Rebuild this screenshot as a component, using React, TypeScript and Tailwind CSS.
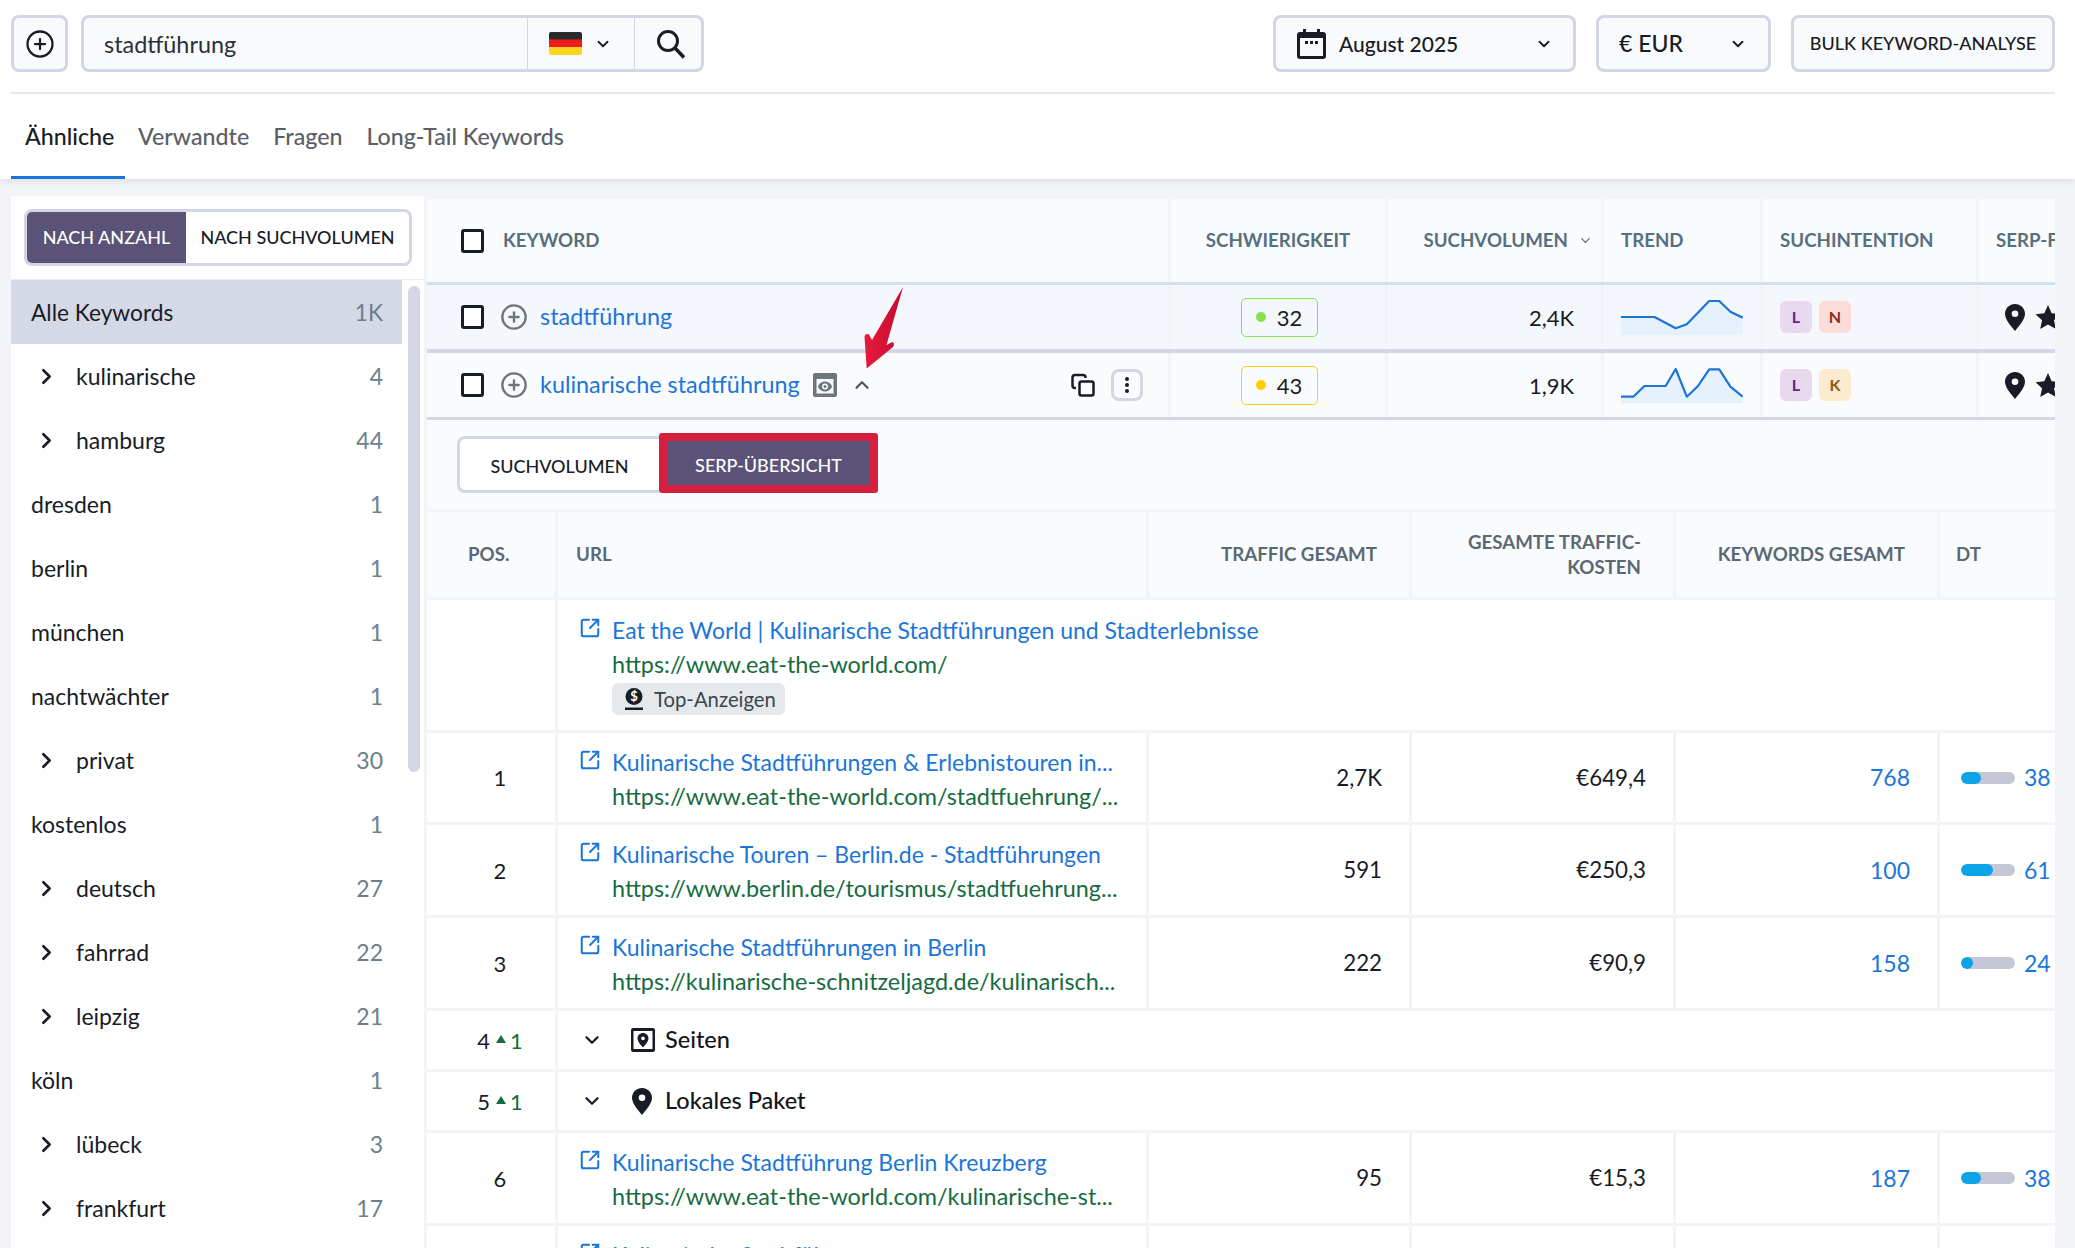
import { ChevronDown, ChevronRight, ChevronUp, CirclePlus, SquareArrowOutUpRight } from 'lucide-react';

const sidebarItems = [
    { label: 'kulinarische', count: '4', nested: true },
    { label: 'hamburg', count: '44', nested: true },
    { label: 'dresden', count: '1' },
    { label: 'berlin', count: '1' },
    { label: 'münchen', count: '1' },
    { label: 'nachtwächter', count: '1' },
    { label: 'privat', count: '30', nested: true },
    { label: 'kostenlos', count: '1' },
    { label: 'deutsch', count: '27', nested: true },
    { label: 'fahrrad', count: '22', nested: true },
    { label: 'leipzig', count: '21', nested: true },
    { label: 'köln', count: '1' },
    { label: 'lübeck', count: '3', nested: true },
    { label: 'frankfurt', count: '17', nested: true },
];

const keywordCols = 'grid grid-cols-[744px_217px_216px_159px_216px_76px]';
const serpCols = 'grid grid-cols-[131px_591px_263px_264px_264px_115px]';
const cellLine = 'border-r-[3px] border-[#f3f4f8]';
const headText = 'text-[18.700px] font-bold text-[#55707f]';

function Pin({ className }: { className?: string }) {
    return (
        <svg viewBox="0 0 20 27" className={className}>
            <path
                fill="#181c26"
                fillRule="evenodd"
                d="M10 0C4.500 0 0 4.300 0 9.800 0 15.800 6.600 22.600 10 27c3.400-4.400 10-11.200 10-17.200C20 4.300 15.500 0 10 0zm0 6.500a3.300 3.300 0 1 1 0 6.600 3.300 3.300 0 0 1 0-6.600z"
            />
        </svg>
    );
}

function Star({ className }: { className?: string }) {
    return (
        <svg viewBox="0 0 24 24" className={className}>
            <path fill="#181c26" d="M12 1l3.400 7.500 8.100.9-6 5.500 1.700 8.100L12 18.900 4.800 23l1.700-8.100-6-5.500 8.100-.9z" />
        </svg>
    );
}

function Checkbox() {
    return <span className="block h-[24px] w-[23px] shrink-0 rounded-[3px] border-[3px] border-[#181c26] bg-white" />;
}

function Sparkline({ points, fill }: { points: string; fill: string }) {
    return (
        <svg width="122" height="40" viewBox="0 0 122 40">
            <polygon points={fill} fill="#e5f1fb" />
            <polyline points={points} fill="none" stroke="#1b75d9" strokeWidth="2.200" strokeLinejoin="round" />
        </svg>
    );
}

function KeywordRow(props: {
    keyword: string;
    score: string;
    volume: string;
    badge: string;
    dot: string;
    letter: string;
    letterBg: string;
    letterColor: string;
    bg: string;
    height: string;
    expanded?: boolean;
    spark: React.ReactNode;
}) {
    return (
        <div className={`${keywordCols} ${props.bg} ${props.height}`}>
            <div className={`flex items-center pl-[34px] ${cellLine}`}>
                <Checkbox />
                <CirclePlus className="ml-[16px] h-[28px] w-[28px] shrink-0 text-[#6d757d]" strokeWidth={2} />
                <a className="ml-[12px] text-[23.400px] text-[#1b75d9]">{props.keyword}</a>
                {props.expanded && (
                    <>
                        <svg viewBox="0 0 24 24" className="ml-[13px] h-[24px] w-[24px]">
                            <path
                                fill="#6d757d"
                                fillRule="evenodd"
                                d="M2 0h20a2 2 0 0 1 2 2v20a2 2 0 0 1-2 2H2a2 2 0 0 1-2-2V2a2 2 0 0 1 2-2zm1.500 6v14.500h17V6zM12 8.500c3.500 0 6.200 2.400 7 5-.8 2.600-3.500 5-7 5s-6.200-2.400-7-5c.8-2.600 3.500-5 7-5zm0 2a3 3 0 1 0 0 6 3 3 0 0 0 0-6zm0 1.500a1.500 1.500 0 1 1 0 3 1.500 1.500 0 0 1 0-3z"
                            />
                        </svg>
                        <ChevronUp className="ml-[14px] h-[22px] w-[22px] text-[#4b5563]" strokeWidth={2.400} />
                        <svg viewBox="0 0 24 24" fill="none" stroke="#181c26" strokeWidth="2.500" className="ml-auto h-[24px] w-[24px]">
                            <rect x="8.500" y="8.500" width="14" height="14" rx="2" />
                            <path d="M5 15H4a2.500 2.500 0 0 1-2.500-2.500v-8A2.500 2.500 0 0 1 4 2h8a2.500 2.500 0 0 1 2.500 2.500V5" />
                        </svg>
                        <span className="mr-[25px] ml-[16px] flex h-[32px] w-[32px] items-center justify-center rounded-[8px] border-[3px] border-[#d3d6e4] bg-[#fafbfd]">
                            <span className="flex flex-col gap-[2px]">
                                <span className="h-[4px] w-[4px] rounded-full bg-[#181c26]" />
                                <span className="h-[4px] w-[4px] rounded-full bg-[#181c26]" />
                                <span className="h-[4px] w-[4px] rounded-full bg-[#181c26]" />
                            </span>
                        </span>
                    </>
                )}
            </div>
            <div className={`flex items-center justify-center pl-[2px] ${cellLine}`}>
                <span className={`flex h-[39px] w-[77px] items-center justify-center gap-[11px] rounded-[5px] border-[1.500px] text-[22px] ${props.badge}`}>
                    <span className={`h-[10px] w-[10px] rounded-full ${props.dot}`} />
                    {props.score}
                </span>
            </div>
            <div className={`flex items-center justify-end pr-[27px] text-[22px] ${cellLine}`}>{props.volume}</div>
            <div className={`flex items-center pl-[17px] ${cellLine}`}>{props.spark}</div>
            <div className={`flex items-center gap-[7px] pl-[17px] ${cellLine}`}>
                <span className="flex h-[32px] w-[32px] items-center justify-center rounded-[6px] bg-[#e8d9ef] text-[16px] font-bold text-[#5b2a86]">
                    L
                </span>
                <span className={`flex h-[32px] w-[32px] items-center justify-center rounded-[6px] text-[16px] font-bold ${props.letterBg} ${props.letterColor}`}>
                    {props.letter}
                </span>
            </div>
            <div className="flex items-center gap-[10px] overflow-hidden pl-[26px]">
                <Pin className="h-[27px] w-[20px] shrink-0" />
                <Star className="h-[26px] w-[26px] shrink-0" />
            </div>
        </div>
    );
}

function UrlCell({ title, url, badge }: { title: string; url: string; badge?: boolean }) {
    return (
        <div className={`flex gap-[11px] pl-[21px] ${badge ? 'pt-[13px]' : 'pt-[12px]'}`}>
            <SquareArrowOutUpRight className="mt-[4px] h-[22px] w-[22px] shrink-0 text-[#1b75d9]" strokeWidth={2.200} />
            <div className="min-w-0">
                <div className="text-[23px] leading-[34px] whitespace-nowrap text-[#1b75d9]">{title}</div>
                <div className="text-[23.400px] leading-[34px] whitespace-nowrap text-[#166c3f]">{url}</div>
                {badge && (
                    <span className="mt-[2px] flex h-[32px] w-[173px] items-center gap-[10px] rounded-[6px] bg-[#e6e9ec] pl-[12px] text-[20.300px] text-[#3a4650]">
                        <svg viewBox="0 0 20 22" className="h-[22px] w-[20px] shrink-0">
                            <circle cx="10" cy="8.500" r="8.500" fill="#181c26" />
                            <path fill="#181c26" d="M1 19.500h18V22H1z" />
                            <text x="10" y="13" textAnchor="middle" fontSize="13" fontWeight="700" fill="#fff">
                                $
                            </text>
                        </svg>
                        Top-Anzeigen
                    </span>
                )}
            </div>
        </div>
    );
}

function Bar({ value, width }: { value: string; width: number }) {
    return (
        <div className="flex items-center gap-[9px] pl-[21px]">
            <div className="h-[12px] w-[54px] shrink-0 overflow-hidden rounded-full bg-[#c5c7d6]">
                <div className="h-full rounded-full bg-[#0da4e7]" style={{ width }} />
            </div>
            <a className="text-[23px] text-[#1b75d9]">{value}</a>
        </div>
    );
}

function SerpRow(props: { pos: string; title: string; url: string; traffic: string; cost: string; keywords: string; dt: string; bar: number; height: string }) {
    return (
        <div className={`${serpCols} border-b-[3px] border-[#f3f4f8] bg-white ${props.height}`}>
            <div className={`flex items-center justify-center pl-[18px] text-[22px] ${cellLine}`}>{props.pos}</div>
            <div className={cellLine}>
                <UrlCell title={props.title} url={props.url} />
            </div>
            <div className={`flex items-center justify-end pr-[27px] text-[22.300px] ${cellLine}`}>{props.traffic}</div>
            <div className={`flex items-center justify-end pr-[27px] text-[22.300px] ${cellLine}`}>{props.cost}</div>
            <div className={`flex items-center justify-end pr-[27px] text-[23px] text-[#1b75d9] ${cellLine}`}>{props.keywords}</div>
            <Bar value={props.dt} width={props.bar} />
        </div>
    );
}

function GroupRow({ pos, label, icon }: { pos: string; label: string; icon: React.ReactNode }) {
    return (
        <div className="grid h-[61px] grid-cols-[131px_1fr] border-b-[3px] border-[#f3f4f8] bg-white">
            <div className={`flex items-center justify-center gap-[6px] pl-[18px] text-[22px] ${cellLine}`}>
                {pos}
                <span className="flex items-center gap-[4px] text-[#166c3f]">
                    <span className="mt-[-2px] h-0 w-0 border-x-[5px] border-b-[8px] border-x-transparent border-b-[#166c3f]" />1
                </span>
            </div>
            <div className="flex items-center pl-[23px]">
                <ChevronDown className="h-[22px] w-[22px] text-[#181c26]" strokeWidth={2.500} />
                <span className="ml-[28px] flex w-[34px] shrink-0">{icon}</span>
                <span className="text-[23.500px] font-medium text-[#12151c]">{label}</span>
            </div>
        </div>
    );
}

export default function App() {
    return (
        <div className="relative h-[1248px] w-[2075px] overflow-hidden bg-[#f3f4f8] font-[Lato,sans-serif] text-[#181c26]">
            <div className="relative z-10 bg-white pr-[20px] pl-[11px] shadow-[0_2px_8px_rgba(20,30,60,0.1)]">
                <div className="flex h-[92px] items-start pt-[15px]">
                    <button className="flex h-[57px] w-[57px] items-center justify-center rounded-[8px] border-[3px] border-[#d3d6e4] bg-[#f9fafc]">
                        <CirclePlus className="h-[30px] w-[30px] text-[#181c26]" strokeWidth={1.800} />
                    </button>
                    <div className="ml-[13px] flex h-[57px] w-[623px] items-stretch rounded-[8px] border-[3px] border-[#d3d6e4] bg-[#f9fafc]">
                        <div className="flex flex-1 items-center pt-[2px] pl-[20px] text-[23.400px] text-[#2b2f38]">stadtführung</div>
                        <div className="flex w-[108px] items-center gap-[12px] border-x border-[#d3d6e4] pl-[21px]">
                            <svg viewBox="0 0 33 23" className="h-[23px] w-[33px]">
                                <path fill="#2a2a2a" d="M2 0h29a2 2 0 0 1 2 2v6H0V2a2 2 0 0 1 2-2z" />
                                <rect y="7.500" width="33" height="8" fill="#ef1c1c" />
                                <path fill="#ffd61f" d="M0 15h33v6a2 2 0 0 1-2 2H2a2 2 0 0 1-2-2z" />
                            </svg>
                            <ChevronDown className="h-[18px] w-[18px] text-[#181c26]" strokeWidth={2.400} />
                        </div>
                        <div className="flex w-[66px] items-center justify-center pl-[5px]">
                            <svg viewBox="0 0 30 30" fill="none" stroke="#181c26" className="h-[30px] w-[30px]">
                                <circle cx="12" cy="12" r="9.500" strokeWidth="3" />
                                <path d="M19 19l9 9.500" strokeWidth="3.500" />
                            </svg>
                        </div>
                    </div>
                    <button className="ml-auto flex h-[57px] w-[303px] items-center rounded-[8px] border-[3px] border-[#d3d6e4] bg-[#f9fafc] pl-[21px] text-[21px] font-medium">
                        <svg viewBox="0 0 29 30" className="h-[30px] w-[29px]">
                            <path
                                fill="#181c26"
                                fillRule="evenodd"
                                d="M6 0h3v3h11V0h3v3h3a3 3 0 0 1 3 3v21a3 3 0 0 1-3 3H3a3 3 0 0 1-3-3V6a3 3 0 0 1 3-3h3zM3 9v18h23V9zm5 3h3v3H8zm5 0h3v3h-3zm5 0h3v3h-3z"
                            />
                        </svg>
                        <span className="ml-[13px] flex-1 text-left">August 2025</span>
                        <ChevronDown className="mr-[20px] h-[18px] w-[18px]" strokeWidth={2.400} />
                    </button>
                    <button className="ml-[20px] flex h-[57px] w-[175px] items-center rounded-[8px] border-[3px] border-[#d3d6e4] bg-[#f9fafc] pl-[20px] text-[23px] font-medium">
                        <span className="flex-1 text-left">€ EUR</span>
                        <ChevronDown className="mr-[21px] h-[18px] w-[18px]" strokeWidth={2.400} />
                    </button>
                    <button className="ml-[20px] flex h-[57px] w-[264px] items-center justify-center rounded-[8px] border-[3px] border-[#d3d6e4] bg-[#f9fafc] text-[18px] font-medium">
                        BULK KEYWORD-ANALYSE
                    </button>
                </div>
                <div className="h-[2px] bg-[#e5e7f0]" />
                <div className="flex h-[85px] items-stretch text-[23.200px] font-medium text-[#5a6066]">
                    <div className="flex w-[114px] items-center border-b-[3px] border-[#1b75d9] pt-[3px] pl-[14px] text-[#181c26]">Ähnliche</div>
                    <div className="flex items-center pr-[12px] pl-[13px]">Verwandte</div>
                    <div className="flex items-center px-[12px]">Fragen</div>
                    <div className="flex items-center px-[12px]">Long-Tail Keywords</div>
                </div>
            </div>

            <div className="flex items-start gap-[3px] pt-[17px] pl-[11px]">
                <aside className="h-[1100px] w-[413px] bg-white">
                    <div className="h-[84px] border-b border-[#e9ebf2] pt-[13px] pl-[13px]">
                        <div className="flex h-[57px] w-[388px] overflow-hidden rounded-[8px] border-[3px] border-[#d3d6e4] text-[18px] font-medium">
                            <div className="flex w-[159px] items-center justify-center bg-[#5a5277] text-white">NACH ANZAHL</div>
                            <div className="flex flex-1 items-center justify-center">NACH SUCHVOLUMEN</div>
                        </div>
                    </div>
                    <div className="relative">
                        <div className="mr-[22px] flex h-[64px] items-center justify-between bg-[#d5d8e5] pt-[2px] pr-[19px] pl-[20px] text-[22.700px]">
                            <span>Alle Keywords</span>
                            <span className="text-[#6b7f8c]">1K</span>
                        </div>
                        {sidebarItems.map((item) => (
                            <div key={item.label} className="mr-[22px] flex h-[64px] items-center justify-between pt-[1px] pr-[19px] pl-[20px] text-[23px]">
                                <span className="flex items-center">
                                    {item.nested && <ChevronRight className="mr-[17px] ml-[3px] h-[25px] w-[25px]" strokeWidth={2.500} />}
                                    {item.label}
                                </span>
                                <span className="text-[#6b7f8c]">{item.count}</span>
                            </div>
                        ))}
                        <div className="absolute top-[6px] right-[4px] h-[486px] w-[12px] rounded-full bg-[#d3d6e4]" />
                    </div>
                </aside>

                <main className="mt-[3px] w-[1628px] overflow-hidden bg-[#fafbfd]">
                    <div className={`${keywordCols} h-[86px] border-b-[3px] border-[#cfe0f5] ${headText}`}>
                        <div className={`flex items-center gap-[19px] pl-[34px] ${cellLine}`}>
                            <Checkbox />
                            KEYWORD
                        </div>
                        <div className={`flex items-center justify-center ${cellLine}`}>SCHWIERIGKEIT</div>
                        <div className={`flex items-center justify-end gap-[10px] pr-[8px] ${cellLine}`}>
                            SUCHVOLUMEN
                            <ChevronDown className="h-[15px] w-[15px]" strokeWidth={2} />
                        </div>
                        <div className={`flex items-center pl-[17px] ${cellLine}`}>TREND</div>
                        <div className={`flex items-center pl-[17px] ${cellLine}`}>SUCHINTENTION</div>
                        <div className="flex items-center overflow-hidden pl-[17px] whitespace-nowrap">SERP-FEATURES</div>
                    </div>
                    <KeywordRow
                        keyword="stadtführung"
                        score="32"
                        volume="2,4K"
                        badge="border-[#84e24a]"
                        dot="bg-[#84e24a]"
                        letter="N"
                        letterBg="bg-[#fbdcd8]"
                        letterColor="text-[#8f2a1f]"
                        bg="bg-[#f4f7fc]"
                        height="h-[64px]"
                        spark={
                            <Sparkline
                                points="0,20 33.500,20 54.700,31.300 65.800,27.300 88.200,4 98.300,4 109.400,14.700 121.700,20.700"
                                fill="0,20 33.500,20 54.700,31.300 65.800,27.300 88.200,4 98.300,4 109.400,14.700 121.700,20.700 121.700,38.300 0,38.300"
                            />
                        }
                    />
                    <div className="h-[4px] bg-[#d3d6e4]" />
                    <KeywordRow
                        expanded
                        keyword="kulinarische stadtführung"
                        score="43"
                        volume="1,9K"
                        badge="border-[#ffcf00]"
                        dot="bg-[#ffcf00]"
                        letter="K"
                        letterBg="bg-[#fcebd0]"
                        letterColor="text-[#8f5a12]"
                        bg="bg-[#fafbfd]"
                        height="h-[64px]"
                        spark={
                            <Sparkline
                                points="0,31.700 12.300,31.700 23.400,21 44.600,21 54.700,4 65.800,31.700 77,21 88.200,4.300 98.300,4.300 109.400,21.700 121.700,31.700"
                                fill="0,31.700 12.300,31.700 23.400,21 44.600,21 54.700,4 65.800,31.700 77,21 88.200,4.300 98.300,4.300 109.400,21.700 121.700,31.700 121.700,38.300 0,38.300"
                            />
                        }
                    />
                    <div className="h-[3px] bg-[#d3d6e4]" />

                    <div className="flex h-[89px] items-start pt-[13px] pl-[30px]">
                        <div className="mt-[3px] flex h-[57px] w-[202px] items-center justify-center rounded-l-[8px] border-[3px] border-r-0 border-[#d3d6e4] bg-white pt-[3px] text-[18px] font-medium">
                            SUCHVOLUMEN
                        </div>
                        <div className="flex h-[60px] w-[219px] items-center justify-center rounded-[3px] border-[8px] border-[#d61f3f] bg-[#5a5277] pt-[4px] text-[18px] font-medium text-white">
                            SERP-ÜBERSICHT
                        </div>
                    </div>

                    <div className="border-t-[3px] border-[#f3f4f8]" />
                    <div className={`${serpCols} h-[88px] border-b-[3px] border-[#f3f4f8] text-[18.700px] font-bold text-[#5a6a75]`}>
                        <div className={`flex items-center pl-[41px] ${cellLine}`}>POS.</div>
                        <div className={`flex items-center pl-[18px] ${cellLine}`}>URL</div>
                        <div className={`flex items-center justify-end pr-[32px] ${cellLine}`}>TRAFFIC GESAMT</div>
                        <div className={`flex items-center justify-end pr-[32px] text-right leading-[25px] ${cellLine}`}>
                            GESAMTE TRAFFIC-
                            <br />
                            KOSTEN
                        </div>
                        <div className={`flex items-center justify-end pr-[32px] ${cellLine}`}>KEYWORDS GESAMT</div>
                        <div className="flex items-center pl-[16px]">DT</div>
                    </div>

                    <div className={`${serpCols} h-[133px] border-b-[3px] border-[#f3f4f8] bg-white`}>
                        <div className={cellLine} />
                        <div className="col-span-5">
                            <UrlCell title="Eat the World | Kulinarische Stadtführungen und Stadterlebnisse" url="https://www.eat-the-world.com/" badge />
                        </div>
                    </div>
                    <SerpRow pos="1" title="Kulinarische Stadtführungen & Erlebnistouren in..." url="https://www.eat-the-world.com/stadtfuehrung/..." traffic="2,7K" cost="€649,4" keywords="768" dt="38" bar={20} height="h-[92px]" />
                    <SerpRow pos="2" title="Kulinarische Touren – Berlin.de - Stadtführungen" url="https://www.berlin.de/tourismus/stadtfuehrung..." traffic="591" cost="€250,3" keywords="100" dt="61" bar={32} height="h-[93px]" />
                    <SerpRow pos="3" title="Kulinarische Stadtführungen in Berlin" url="https://kulinarische-schnitzeljagd.de/kulinarisch..." traffic="222" cost="€90,9" keywords="158" dt="24" bar={12} height="h-[93px]" />
                    <GroupRow
                        pos="4"
                        label="Seiten"
                        icon={
                            <svg viewBox="0 0 24 24" className="h-[24px] w-[24px]">
                                <path
                                    fill="#181c26"
                                    fillRule="evenodd"
                                    d="M2 0h20a2 2 0 0 1 2 2v20a2 2 0 0 1-2 2H2a2 2 0 0 1-2-2V2a2 2 0 0 1 2-2zm.500 3v18h19V3zM12 5c3 0 5.500 2.300 5.500 5.300 0 3.500-3.500 6.900-5.500 9.200-2-2.300-5.500-5.700-5.500-9.200C6.500 7.300 9 5 12 5zm0 3.400a1.900 1.900 0 1 0 0 3.800 1.900 1.900 0 0 0 0-3.800z"
                                />
                            </svg>
                        }
                    />
                    <GroupRow pos="5" label="Lokales Paket" icon={<Pin className="ml-[1px] h-[27px] w-[20px]" />} />
                    <SerpRow pos="6" title="Kulinarische Stadtführung Berlin Kreuzberg" url="https://www.eat-the-world.com/kulinarische-st..." traffic="95" cost="€15,3" keywords="187" dt="38" bar={20} height="h-[93px]" />
                    <div className={`${serpCols} h-[90px] bg-white`}>
                        <div className={cellLine} />
                        <div className={cellLine}>
                            <UrlCell title="Kulinarische Stadtführ" url="" />
                        </div>
                        <div className={cellLine} />
                        <div className={cellLine} />
                        <div className={cellLine} />
                    </div>
                </main>
            </div>

            <svg viewBox="0 0 40 82" className="absolute top-[287px] left-[863px] z-20 h-[82px] w-[40px]">
                <defs>
                    <linearGradient id="arrowRed" x1="0" y1="0" x2="1" y2="0">
                        <stop offset="0" stopColor="#e8193f" />
                        <stop offset="1" stopColor="#c20f2d" />
                    </linearGradient>
                </defs>
                <path fill="url(#arrowRed)" d="M40 0L23.500 58l5.500-3q3.500 1 1 5L3.700 81.500 1.500 50q.5-4 4.500-2.500L9 53z" />
            </svg>
        </div>
    );
}
